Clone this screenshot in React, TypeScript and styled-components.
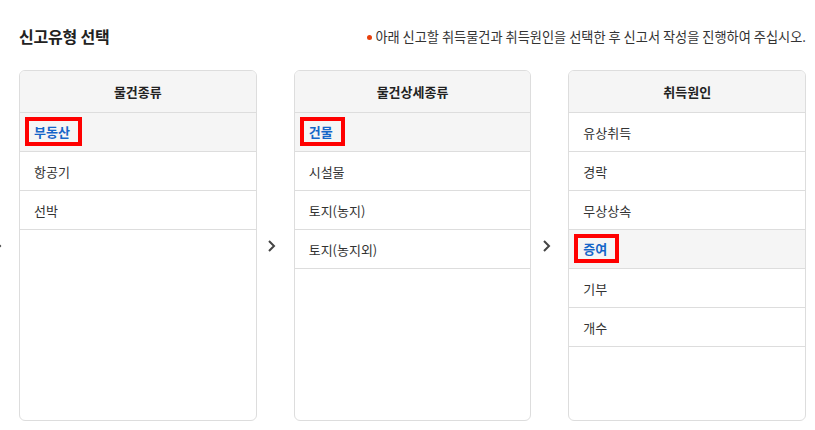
import React from 'react'
import styled, { createGlobalStyle } from 'styled-components'

const GlobalStyle = createGlobalStyle`
  html, body {
    margin: 0;
    padding: 0;
    background: #fff;
    overflow: hidden;
  }
  body {
    font-family: 'Noto Sans CJK KR', 'Noto Sans', sans-serif;
    color: #333;
  }
`

const Page = styled.div`
  width: 815px;
  height: 430px;
  padding: 21px 9px 0 19px;
  box-sizing: border-box;
`

const TopBar = styled.div`
  display: flex;
  align-items: center;
  justify-content: space-between;
  height: 32px;
`

const Title = styled.h2`
  margin: 0 0 2px;
  font-size: 16px;
  font-weight: 700;
  color: #222;
  letter-spacing: -0.2px;
`

const Notice = styled.p`
  margin: 0 0 2px;
  display: flex;
  align-items: center;
  font-size: 13.2px;
  color: #333;
`

const Dot = styled.span`
  display: inline-block;
  width: 5px;
  height: 5px;
  border-radius: 50%;
  background: #e8400c;
  margin: 2px 3px 0 0;
`

const Columns = styled.div`
  display: flex;
  margin-top: 17px;
  margin-left: -37px;
`

const Arrow = styled.div`
  width: 37px;
  display: flex;
  align-items: center;
  justify-content: center;
  padding-right: 7px;
  box-sizing: border-box;
  flex-shrink: 0;
`

const Card = styled.div`
  flex: 1;
  height: 351px;
  border: 1px solid #ddd;
  border-radius: 6px;
  overflow: hidden;
  box-sizing: border-box;
`

const CardHead = styled.div`
  height: 42px;
  display: flex;
  align-items: center;
  justify-content: center;
  background: #f5f5f5;
  border-bottom: 1px solid #ddd;
  box-sizing: border-box;
  font-size: 13px;
  font-weight: 700;
  color: #222;
`

const Item = styled.div<{ $active?: boolean }>`
  height: 39px;
  display: flex;
  align-items: center;
  padding-left: 14px;
  border-bottom: 1px solid #ddd;
  box-sizing: border-box;
  font-size: 13px;
  background: ${p => (p.$active ? '#f5f5f5' : '#fff')};
  color: ${p => (p.$active ? '#1565c8' : '#333')};
  font-weight: ${p => (p.$active ? 700 : 400)};
`

const Marked = styled.span`
  display: inline-block;
  margin: -2px 0 0 -9px;
  padding: 1px 8px 1px 5px;
  border: 4px solid #ff0000;
  line-height: 19px;
`

const Chevron = () => (
  <svg width='9' height='12' viewBox='0 0 9 12'>
    <polyline points='2 1 7 6 2 11' fill='none' stroke='#444' strokeWidth='2' />
  </svg>
)

type Column = {
  title: string
  items: string[]
  active: string
}

const columns: Column[] = [
  { title: '물건종류', items: ['부동산', '항공기', '선박'], active: '부동산' },
  { title: '물건상세종류', items: ['건물', '시설물', '토지(농지)', '토지(농지외)'], active: '건물' },
  { title: '취득원인', items: ['유상취득', '경락', '무상상속', '증여', '기부', '개수'], active: '증여' }
]

export default function App () {
  return (
    <Page>
      <GlobalStyle />
      <TopBar>
        <Title>신고유형 선택</Title>
        <Notice>
          <Dot />
          아래 신고할 취득물건과 취득원인을 선택한 후 신고서 작성을 진행하여 주십시오.
        </Notice>
      </TopBar>
      <Columns>
        {columns.map(col => (
          <React.Fragment key={col.title}>
            <Arrow><Chevron /></Arrow>
            <Card>
              <CardHead>{col.title}</CardHead>
              {col.items.map(item => (
                <Item key={item} $active={item === col.active}>
                  {item === col.active ? <Marked>{item}</Marked> : item}
                </Item>
              ))}
            </Card>
          </React.Fragment>
        ))}
      </Columns>
    </Page>
  )
}
